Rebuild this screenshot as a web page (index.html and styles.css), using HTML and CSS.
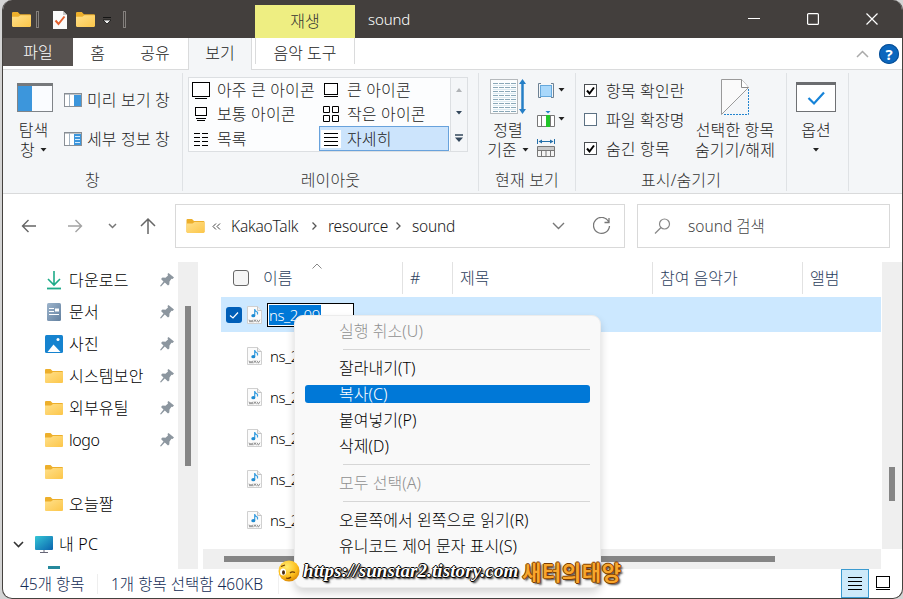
FILE: index.html
```html
<!DOCTYPE html>
<html lang="ko">
<head>
  <meta charset="UTF-8">
  <meta name="viewport" content="width=device-width, initial-scale=1">
  <title>sound</title>
  <link rel="stylesheet" href="styles.css">
</head>
<body>
  <svg class="defs" width="0" height="0">
    <defs>
      <linearGradient id="gFolder" x1="0" y1="0" x2="1" y2="1"><stop offset="0" stop-color="#ffe08a"/><stop offset="1" stop-color="#fcc64a"/></linearGradient>
      <linearGradient id="gPc" x1="0" y1="0" x2="1" y2="1"><stop offset="0" stop-color="#35c6d6"/><stop offset="1" stop-color="#0a63ae"/></linearGradient>
      <linearGradient id="gDoc" x1="0" y1="0" x2="1" y2="1"><stop offset="0" stop-color="#9db4cc"/><stop offset="1" stop-color="#62809f"/></linearGradient>
      <radialGradient id="gFace" cx=".4" cy=".3" r=".8"><stop offset="0" stop-color="#ffec70"/><stop offset=".6" stop-color="#fdbd1c"/><stop offset="1" stop-color="#d07800"/></radialGradient>
      <symbol id="folder" viewBox="0 0 18 14"><path d="M0 1Q0 0 1 0H5.500L7.500 2H17Q18 2 18 3V13H0Z" fill="#edaf2b"/><path d="M0 4.500H6L8 3H17.500Q18 3 18 3.500V13Q18 14 17 14H1Q0 14 0 13Z" fill="url(#gFolder)"/></symbol>
      <symbol id="pin" viewBox="0 0 14 14"><path d="M8.500 0L14 4.500L12.500 6L11.500 5.800L9.500 8.500L9.300 11.500L8 12.500L4.800 9.500L1 13.500L0 13L3.500 8.500L1 6L2.500 4.500L5.500 4.700L8 2.500L7.500 1Z" fill="#8c969f"/></symbol>
      <symbol id="wav" viewBox="0 0 15 18"><path d="M.5.5H10.500L14.500 4.500V17.500H.5Z" fill="#fbfbfb" stroke="#d0d0d0"/><path d="M10.500.5V4.500H14.500" fill="#eee" stroke="#c4c4c4"/><path d="M7.700 3V9.500M7.700 3.500Q8.500 5.500 10.500 6.200V8.500" fill="none" stroke="#3a9fe0" stroke-width="1.200"/><ellipse cx="6.300" cy="9.700" rx="2" ry="1.600" fill="#1e8bd2"/><path d="M2 13.700L3 16.200L4 14.200L5 16.200L6 13.700M6.700 16.200L8 13.700L9.400 16.200M10 13.700L11.400 16.200L12.900 13.700" fill="none" stroke="#888" stroke-width=".9"/></symbol>
      <symbol id="caret" viewBox="0 0 6 4"><path d="M0 0H6L3 3.500Z" fill="currentColor"/></symbol>
    </defs>
  </svg>

  <div class="window">
    <header class="titlebar">
      <div class="quick">
        <svg class="q1" width="19" height="15"><use href="#folder"/></svg>
        <i class="q-sep"></i>
        <svg class="q2" width="14" height="18" viewBox="0 0 14 18"><path d="M0 0H10L14 4V18H0Z" fill="#fafafa"/><path d="M10 0V4H14" fill="#c9c9c9"/><path d="M2.500 9.500L5.500 13L11.500 5.500" fill="none" stroke="#e3612f" stroke-width="2"/></svg>
        <svg class="q3" width="19" height="15"><use href="#folder"/></svg>
        <svg class="q4" width="8" height="7" viewBox="0 0 8 7"><path d="M0 .5H8" stroke="#151515"/><path d="M0 3H8L4 7Z" fill="#eee" stroke="#111" stroke-width=".8"/></svg>
        <i class="q-sep"></i>
      </div>
      <div class="context-tab">재생</div>
      <div class="title">sound</div>
      <div class="win-buttons">
        <svg width="12" height="12"><path d="M0 5.500H12" stroke="#fff"/></svg>
        <svg width="12" height="12"><rect x=".6" y=".6" width="10.800" height="10.800" rx="1" fill="none" stroke="#fff" stroke-width="1.200"/></svg>
        <svg width="12" height="12"><path d="M.5.5L11.500 11.500M11.500.5L.5 11.500" stroke="#fff" stroke-width="1.200"/></svg>
      </div>
    </header>

    <nav class="tabs">
      <div class="tab file">파일</div>
      <div class="tab home">홈</div>
      <div class="tab share">공유</div>
      <div class="tab view">보기</div>
      <div class="tab music">음악 도구</div>
      <div class="tab-tools">
        <svg width="14" height="8"><path d="M1 7L6.500 1.500L12 7" fill="none" stroke="#aaa" stroke-width="1.500"/></svg>
        <span class="help">?</span>
      </div>
    </nav>

    <section class="ribbon">
      <div class="group g-pane">
        <div class="group-body">
          <div class="big nav-pane">
            <svg width="36" height="29"><rect x=".5" y=".5" width="35" height="28" fill="#fafcff" stroke="#808488"/><path d="M0 1.500H36" stroke="#76797c" stroke-width="3"/><rect x="1" y="3" width="14" height="25" fill="#3c96dc"/></svg>
            <span>탐색</span>
            <span>창 <svg class="caret" width="7" height="4"><use href="#caret"/></svg></span>
          </div>
          <div class="stack">
            <div class="small"><svg width="18" height="14"><rect x=".5" y=".5" width="17" height="13" fill="#fff" stroke="#8a9097"/><path d="M0 1H18" stroke="#858b91"/><path d="M5.500 1V13" stroke="#a4b4c2"/><rect x="10" y="2" width="7" height="11" fill="#3c96dc"/></svg>미리 보기 창</div>
            <div class="small"><svg width="18" height="14"><rect x=".5" y=".5" width="17" height="13" fill="#fff" stroke="#8a9097"/><path d="M0 1H18" stroke="#858b91"/><path d="M5.500 1V13" stroke="#a4b4c2"/><rect x="10" y="2" width="7" height="11" fill="#3c96dc"/><path d="M11 4.500H16M11 7.500H16M11 10.500H16" stroke="#d5ecff"/></svg>세부 정보 창</div>
          </div>
        </div>
        <div class="group-label">창</div>
      </div>

      <div class="group g-layout">
        <div class="group-body">
          <div class="gallery">
            <div class="item"><svg width="20" height="18"><rect x="1.500" y="1.500" width="17" height="14" fill="#fff" stroke="#000"/><path d="M4 17.500H16" stroke="#000"/></svg>아주 큰 아이콘</div>
            <div class="item"><svg width="20" height="18"><rect x="3.500" y="2.500" width="13" height="11" fill="#fff" stroke="#000"/><path d="M3 15.500H17" stroke="#000"/></svg>큰 아이콘</div>
            <div class="item"><svg width="20" height="18"><rect x="4.500" y="2.500" width="11" height="8" fill="#fff" stroke="#000"/><path d="M5 13.500H15M6 15.500H14" stroke="#000"/></svg>보통 아이콘</div>
            <div class="item"><svg width="20" height="18"><path d="M2.500 1.500H8.500V7.500H2.500ZM11.500 1.500H17.500V7.500H11.500ZM2.500 10.500H8.500V16.500H2.500ZM11.500 10.500H17.500V16.500H11.500Z" fill="#fff" stroke="#000"/></svg>작은 아이콘</div>
            <div class="item"><svg width="20" height="18"><path d="M3 3.500H17M3 7.500H17M3 11.500H17M3 15.500H17" stroke="#000" stroke-dasharray="6 2"/></svg>목록</div>
            <div class="item selected"><svg width="20" height="18"><path d="M3 3.500H17M3 7.500H17M3 11.500H17M3 15.500H17" stroke="#000"/></svg>자세히</div>
          </div>
          <div class="gallery-scroll">
            <svg width="6" height="4"><path d="M0 4H6L3 0Z" fill="#b0b3b6"/></svg>
            <svg class="slate" width="6" height="4"><use href="#caret"/></svg>
            <svg width="8" height="8"><path d="M0 1H8" stroke="#33475b" stroke-width="1.500"/><path d="M0 3.500H8L4 8Z" fill="#33475b"/></svg>
          </div>
        </div>
        <div class="group-label">레이아웃</div>
      </div>

      <div class="group g-current">
        <div class="group-body">
          <div class="big sort">
            <svg width="36" height="36"><rect x=".5" y=".5" width="27" height="34" fill="#fbfdfe" stroke="#b5b9bc"/><path d="M3 4.500H26M3 8.500H26M3 12.500H26M3 16.500H26M3 20.500H26M3 24.500H26M3 28.500H26M3 32.500H26" stroke="#8aa8b8" stroke-dasharray="5 1"/><path d="M3 6.500H26M3 10.500H26M3 14.500H26M3 18.500H26M3 22.500H26M3 26.500H26M3 30.500H26" stroke="#dbeaf1"/><path d="M32.500 2V33" stroke="#267fc6" stroke-width="2.500"/><path d="M29 5L32.500 0L36 5ZM29 30L32.500 35L36 30Z" fill="#267fc6"/></svg>
            <span>정렬</span>
            <span>기준 <svg class="caret" width="7" height="4"><use href="#caret"/></svg></span>
          </div>
          <div class="stack">
            <div class="tool"><svg width="18" height="18"><path d="M4 2.500H1.500V16.500H4M14 2.500H16.500V16.500H14" fill="none" stroke="#6d8193"/><rect x="3.500" y="4.500" width="11" height="11" fill="#a9d8fb" stroke="#65a8dc"/></svg><svg width="7" height="4"><use href="#caret"/></svg></div>
            <div class="tool"><svg width="18" height="18"><path d="M.5 5.500H17.500V16.500H.5ZM4.500 5.500V16.500M13.500 5.500V16.500" fill="#fff" stroke="#777"/><rect x="9" y="5" width="4" height="12" fill="#22c52a"/><path d="M8.500 1H13.500L11 3.500Z" fill="#2781c5"/></svg><svg width="7" height="4"><use href="#caret"/></svg></div>
            <div class="tool"><svg width="18" height="20"><path d="M.5 1V6M17.500 1V6" stroke="#246fa9"/><path d="M2 3.500H16" stroke="#246fa9"/><path d="M1.500 3.500L5 1.500V5.500ZM16.500 3.500L13 1.500V5.500Z" fill="#246fa9"/><path d="M.5 8.500H17.500V18.500H.5ZM.5 12.500H17.500M4.500 12.500V18.500M9 12.500V18.500M13.500 12.500V18.500" fill="#f4f4f4" stroke="#777"/><path d="M1 10.500H17" stroke="#c9c9c9" stroke-width="3"/></svg></div>
          </div>
        </div>
        <div class="group-label">현재 보기</div>
      </div>

      <div class="group g-show">
        <div class="group-body">
          <div class="stack">
            <div class="check"><svg width="13" height="13"><rect x=".5" y=".5" width="12" height="12" fill="#fff" stroke="#4b4f53"/><path d="M3 6.500L5.500 9.500L10 3.500" fill="none" stroke="#000" stroke-width="2"/></svg>항목 확인란</div>
            <div class="check"><svg width="13" height="13"><rect x=".5" y=".5" width="12" height="12" fill="#fff" stroke="#5c7183"/></svg>파일 확장명</div>
            <div class="check"><svg width="13" height="13"><rect x=".5" y=".5" width="12" height="12" fill="#fff" stroke="#4b4f53"/><path d="M3 6.500L5.500 9.500L10 3.500" fill="none" stroke="#000" stroke-width="2"/></svg>숨긴 항목</div>
          </div>
          <div class="big hide">
            <svg width="28" height="37"><path d="M.5 35.500V.5H20.500L27.500 8.500Z" fill="#fafafa" stroke="#9a9a9a"/><path d="M20.500.5V8.500H27.500" fill="#fff" stroke="#8b8b8b"/><path d="M27.500 10V35.500H2" fill="none" stroke="#2284cf" stroke-dasharray="2 1"/></svg>
            <span>선택한 항목</span>
            <span>숨기기/해제</span>
          </div>
        </div>
        <div class="group-label">표시/숨기기</div>
      </div>

      <div class="group g-option">
        <div class="group-body">
          <div class="big option">
            <svg width="40" height="31"><rect x=".5" y=".5" width="39" height="29" fill="#fff" stroke="#6f7174"/><path d="M0 1.500H40" stroke="#6b6d70" stroke-width="3"/><path d="M12.500 16L18 21.500L28 10.500" fill="none" stroke="#1683d8" stroke-width="2.200"/></svg>
            <span>옵션</span>
            <span><svg class="caret" width="6" height="4"><use href="#caret"/></svg></span>
          </div>
        </div>
      </div>
    </section>

    <section class="navbar">
      <svg class="back" width="16" height="16"><path d="M15 8H1.500M7.500 2L1.500 8L7.500 14" fill="none" stroke="#666" stroke-width="1.400"/></svg>
      <svg class="forward" width="16" height="16"><path d="M1 8H14.500M8.500 2L14.500 8L8.500 14" fill="none" stroke="#a3a3a3" stroke-width="1.400"/></svg>
      <svg class="recent" width="9" height="6"><path d="M1 1L4.500 4.500L8 1" fill="none" stroke="#777" stroke-width="1.500"/></svg>
      <svg class="up" width="16" height="18"><path d="M8 17V2M1 9L8 2L15 9" fill="none" stroke="#666" stroke-width="1.500"/></svg>
      <div class="address">
        <svg width="19" height="14"><use href="#folder"/></svg>
        <svg class="laquo" width="9" height="7"><path d="M4 .5L1 3.500L4 6.500M8 .5L5 3.500L8 6.500" fill="none" stroke="#444"/></svg>
        <span class="crumb c1">KakaoTalk</span>
        <svg width="5" height="8"><path d="M.5.5L4 4L.5 7.500" fill="none" stroke="#555" stroke-width="1.300"/></svg>
        <span class="crumb c2">resource</span>
        <svg width="5" height="8"><path d="M.5.5L4 4L.5 7.500" fill="none" stroke="#555" stroke-width="1.300"/></svg>
        <span class="crumb c3">sound</span>
        <svg class="drop" width="13" height="8"><path d="M1 1L6.500 6.500L12 1" fill="none" stroke="#777" stroke-width="1.400"/></svg>
        <svg class="refresh" width="18" height="18"><path d="M15.500 4.500A8 8 0 1 0 16.500 9M16 1V5.500H11.500" fill="none" stroke="#777" stroke-width="1.300"/></svg>
      </div>
      <div class="search">
        <svg width="17" height="16"><circle cx="10.500" cy="6" r="5" fill="none" stroke="#888" stroke-width="1.200"/><path d="M7 9.500L1 15.500" stroke="#888" stroke-width="1.200"/></svg>
        <span>sound 검색</span>
      </div>
    </section>

    <main class="content">
      <aside class="tree">
        <div class="node"><svg class="ico" width="18" height="20"><path d="M9 1V14M3 9L9 15L15 9" fill="none" stroke="#1eab89" stroke-width="1.600"/><path d="M2 18.500H16" stroke="#1eab89" stroke-width="1.800"/></svg><span>다운로드</span><svg class="pin" width="14" height="14"><use href="#pin"/></svg></div>
        <div class="node"><svg class="ico" width="18" height="20"><rect x="2" y="1" width="14" height="18" rx="1.500" fill="url(#gDoc)"/><path d="M4 6.500H9M4 9.500H9M4 12.500H14" stroke="#fff"/><path d="M10 6.500H14V9.500H10Z" fill="#fff"/></svg><span>문서</span><svg class="pin" width="14" height="14"><use href="#pin"/></svg></div>
        <div class="node"><svg class="ico" width="18" height="18"><rect width="18" height="18" rx="1.500" fill="#1683cf"/><path d="M2.500 17L8.500 9.500L15.500 17Z" fill="#fff"/><circle cx="13" cy="4.500" r="1.500" fill="#fff"/></svg><span>사진</span><svg class="pin" width="14" height="14"><use href="#pin"/></svg></div>
        <div class="node"><svg class="ico" width="18" height="14"><use href="#folder"/></svg><span>시스템보안</span><svg class="pin" width="14" height="14"><use href="#pin"/></svg></div>
        <div class="node"><svg class="ico" width="18" height="14"><use href="#folder"/></svg><span>외부유틸</span><svg class="pin" width="14" height="14"><use href="#pin"/></svg></div>
        <div class="node"><svg class="ico" width="18" height="14"><use href="#folder"/></svg><span class="latin">logo</span><svg class="pin" width="14" height="14"><use href="#pin"/></svg></div>
        <div class="node"><svg class="ico" width="18" height="14"><use href="#folder"/></svg></div>
        <div class="node"><svg class="ico" width="18" height="14"><use href="#folder"/></svg><span>오늘짤</span></div>
        <div class="node pc"><svg class="chev" width="11" height="7"><path d="M1 1L5.500 5.500L10 1" fill="none" stroke="#333" stroke-width="1.600"/></svg><svg class="ico" width="18" height="17"><rect y="0" width="18" height="14" rx="1" fill="url(#gPc)"/><path d="M9 14V16M5 16.500H13" stroke="#667"/></svg><span>내 PC</span></div>
        <div class="node cut"><svg width="12" height="10"><rect width="12" height="10" fill="#26899c"/></svg></div>
      </aside>
      <div class="vscroll tree-scroll"><i></i></div>

      <section class="files">
        <div class="file-main">
          <div class="file-area">
            <div class="thead">
              <div class="th name"><i class="box"></i>이름<svg class="sort-mark" width="10" height="6"><path d="M.5 5.500L5 1L9.500 5.500" fill="none" stroke="#888"/></svg></div>
              <div class="th num">#</div>
              <div class="th subject">제목</div>
              <div class="th artist">참여 음악가</div>
              <div class="th">앨범</div>
            </div>
            <div class="row active">
              <svg class="ticked" width="16" height="16"><rect width="16" height="16" rx="3" fill="#005fb8"/><path d="M4 8.500L7 11L12 5.500" fill="none" stroke="#fff" stroke-width="1.200"/></svg>
              <svg width="15" height="18"><use href="#wav"/></svg>
              <div class="rename"><span>ns_2_09</span></div>
            </div>
            <div class="row"><svg width="15" height="18"><use href="#wav"/></svg><span>ns_2</span></div>
            <div class="row"><svg width="15" height="18"><use href="#wav"/></svg><span>ns_2</span></div>
            <div class="row"><svg width="15" height="18"><use href="#wav"/></svg><span>ns_2</span></div>
            <div class="row"><svg width="15" height="18"><use href="#wav"/></svg><span>ns_2</span></div>
            <div class="row"><svg width="15" height="18"><use href="#wav"/></svg><span>ns_2</span></div>
          </div>
          <div class="vscroll file-scroll"><i></i></div>
        </div>
        <div class="hscroll"><i></i></div>
      </section>
    </main>

    <footer class="status">
      <span class="count">45개 항목</span>
      <span class="picked">1개 항목 선택함 460KB</span>
      <div class="modes">
        <div class="mode on"><svg width="14" height="14"><path d="M0 .5H14M0 4.500H14M0 8.500H14M0 12.500H14" stroke="#000"/></svg></div>
        <div class="mode"><svg width="14" height="15"><rect x=".5" y=".5" width="13" height="11" fill="#fff" stroke="#000"/><path d="M0 13.500H14" stroke="#000"/></svg></div>
      </div>
    </footer>
  </div>

  <div class="menu">
    <div class="entry off">실행 취소(U)</div>
    <hr>
    <div class="entry">잘라내기(T)</div>
    <div class="entry hot"><span>복사(C)</span></div>
    <div class="entry">붙여넣기(P)</div>
    <div class="entry">삭제(D)</div>
    <hr>
    <div class="entry off">모두 선택(A)</div>
    <hr>
    <div class="entry">오른쪽에서 왼쪽으로 읽기(R)</div>
    <div class="entry">유니코드 제어 문자 표시(S)</div>
  </div>

  <div class="watermark">
    <svg width="22" height="22"><circle cx="11" cy="11" r="10.500" fill="url(#gFace)"/><ellipse cx="5" cy="12" rx="3" ry="3.500" fill="#fff"/><ellipse cx="5.500" cy="12.500" rx="1.500" ry="2.200" fill="#4a2b10"/><path d="M12 13Q14 11 17 12.500M3 6.500L7 5M8 18Q11 19 13 17" fill="none" stroke="#6e3c05" stroke-width="1.200"/></svg>
    <span class="url">https://sunstar2.tistory.com</span>
    <span class="who">새터의태양</span>
  </div>
</body>
</html>
```

FILE: styles.css
```css
* { box-sizing: border-box; }

body {
  margin: 0;
  width: 903px;
  height: 599px;
  overflow: hidden;
  background: #d4d4d4;
  color: #1a1a1a;
  font-family: 'Noto Sans', 'Noto Sans CJK KR', sans-serif;
  font-size: 16px;
  font-weight: 300;
  line-height: 20px;
  white-space: nowrap;
}

svg { display: block; flex: none; }
.defs { position: absolute; }

.window {
  display: flex;
  flex-direction: column;
  width: 901px;
  height: 599px;
  margin-left: 2px;
  border: 1px solid #45423f;
  border-top: none;
  border-radius: 10px;
  background: #fff;
  overflow: hidden;
}

/* title bar */
.titlebar {
  display: flex;
  height: 38px;
  flex: none;
  background: #433f3d;
  color: #fff;
}
.quick {
  display: flex;
  align-items: center;
  width: 252px;
  padding-left: 9px;
}
.q-sep { width: 3px; height: 17px; border: 1px solid #84807d; }
.q1 { margin-right: 5px; }
.q2 { margin: 2px 9px 0 14px; }
.q3 { margin-right: 8px; }
.q4 { margin: 3px 12px 0 0; }
.context-tab {
  width: 100px;
  margin-top: 5px;
  padding-top: 6px;
  background: #eeee82;
  color: #333;
  text-align: center;
}
.title { padding: 9px 0 0 13px; font-size: 15px; letter-spacing: -0.1px; }
.win-buttons {
  display: flex;
  gap: 47px;
  margin-left: auto;
  padding: 13px 24px 0 0;
}

/* tabs */
.tabs {
  display: flex;
  height: 32px;
  flex: none;
  border-bottom: 1px solid #dadbdc;
  color: #222;
}
.tab { height: 32px; padding-top: 5px; text-align: center; }
.tab.file { width: 70px; height: 28px; padding-top: 4px; background: #575250; color: #fff; }
.tab.home { width: 49px; }
.tab.share { width: 66px; }
.tab.view { width: 64px; background: #f4f6f8; border: solid #dadbdc; border-width: 0 1px; }
.tab.music { width: 100px; margin-left: 3px; border: solid #dadbdc; border-width: 0 1px; height: 26px; }
.tab-tools { display: flex; align-items: center; gap: 9px; margin-left: auto; padding-right: 3px; }
.help {
  width: 20px;
  height: 20px;
  border-radius: 50%;
  background: #0b66bd;
  box-shadow: inset 0 0 0 1px #0a4f95;
  color: #fff;
  font-weight: bold;
  font-size: 15px;
  text-align: center;
}

/* ribbon */
.ribbon {
  display: flex;
  height: 124px;
  flex: none;
  padding: 3px 0 2px;
  background: #f4f6f8;
  border-bottom: 1px solid #d9dadb;
  color: #222;
  letter-spacing: 0.15px;
}
.group { display: flex; flex-direction: column; border-right: 1px solid #dfe2e5; }
.g-pane { width: 180px; }
.g-layout { width: 296px; }
.g-current { width: 97px; }
.g-show { width: 211px; }
.g-option { width: 62px; }
.group-body { display: flex; height: 97px; }
.group-label { text-align: center; line-height: 20px; color: #333; }
.big { display: flex; flex-direction: column; align-items: center; }
.big > svg { margin-bottom: auto; }
.big span { display: flex; align-items: center; justify-content: center; height: 20px; }
.big .caret { margin: 0 0 0 5px; color: #222; }
.stack { display: flex; flex-direction: column; }
.small { display: flex; align-items: center; height: 39px; gap: 5px; }

.nav-pane { width: 61px; padding: 10px 0 10px; }
.nav-pane > svg { margin-left: 3px; }
.g-pane .stack { padding-top: 7px; }

.g-layout .group-body { padding: 4px 0 0 5px; }
.gallery {
  display: grid;
  grid-template-columns: 130px 130px;
  grid-template-rows: 24px 24px 25px;
  width: 263px;
  height: 75px;
  border: 1px solid #dcdfe2;
  background: #fcfdfe;
}
.gallery .item { display: flex; align-items: center; padding-left: 2px; gap: 6px; }
.gallery .selected { background: #cce4fc; border: 1px solid #68a2dc; }
.gallery .selected svg { margin-left: -1px; background: #fff; }
.gallery-scroll {
  display: flex;
  flex-direction: column;
  align-items: center;
  justify-content: space-around;
  width: 17px;
  height: 75px;
  border: 1px solid #dcdfe2;
  border-left: none;
}
.slate { color: #33475b; }

.sort { width: 58px; padding: 6px 0 10px; }
.g-current .stack { padding-top: 2px; }
.tool { display: flex; align-items: center; gap: 3px; height: 29px; }

.g-show .stack { padding: 3px 0 0 8px; width: 118px; }
.check { display: flex; align-items: center; gap: 9px; height: 29px; }
.hide { width: 82px; padding: 6px 0 10px; }
.option { width: 58px; padding: 9px 0 10px; }
.option .caret { margin: 0; }

/* address bar */
.navbar { display: flex; align-items: center; height: 68px; flex: none; padding-bottom: 4px; }
.back { margin-left: 18px; }
.forward { margin-left: 30px; }
.recent { margin-left: 25px; }
.up { margin-left: 23px; }
.address, .search { display: flex; align-items: center; height: 44px; border: 1px solid #d9d9d9; }
.address { width: 450px; margin-left: 19px; padding-left: 10px; font-size: 15.5px; }
.laquo { margin: 0 10px 0 7px; }
.crumb { letter-spacing: -0.2px; }
.c1 { width: 81px; }
.c2 { width: 60px; margin: 0 8px 0 11px; }
.c3 { margin-left: 11px; }
.drop { margin-left: auto; }
.refresh { margin: 0 13px 0 28px; }
.search { width: 253px; margin-left: 12px; padding-left: 16px; gap: 17px; color: #444; font-size: 15.5px; }

/* navigation tree */
.content { display: flex; height: 307px; flex: none; }
.tree { width: 175px; padding-top: 2px; overflow: hidden; }
.node { display: flex; align-items: center; height: 32px; padding-left: 42px; color: #000; letter-spacing: 0.2px; }
.node .ico { margin-right: 6px; }
.node .pin { margin: 0 4px 0 auto; }
.node .latin { letter-spacing: -0.4px; }
.node.pc { margin-top: 8px; padding-left: 10px; }
.node.pc .ico { margin: 0 6px 0 11px; }
.node.cut { height: 10px; margin-top: 6px; padding-left: 45px; }
.vscroll { width: 20px; flex: none; background: #efefef; }
.vscroll i { display: block; width: 6px; margin-left: 7px; background: #858585; }
.tree-scroll { padding-top: 44px; }
.tree-scroll i { height: 160px; }

/* file list */
.files { display: flex; flex-direction: column; flex: 1; margin-left: 5px; }
.file-main { display: flex; height: 287px; }
.file-area { width: 679px; padding-left: 18px; overflow: hidden; }
.thead { display: flex; height: 35px; color: #2c3e5c; }
.th { height: 32px; padding: 6px 0 0 7px; border-right: 1px solid #e2e2e2; }
.th:last-child { border: none; }
.th.name { display: flex; width: 182px; padding-left: 12px; }
.box { width: 16px; height: 16px; margin: 2px 14px 0 0; border: 1px solid #666; border-radius: 3px; background: #f5f5f5; }
.sort-mark { margin: -5px 0 0 20px; }
.th.num { width: 50px; }
.th.subject { width: 200px; }
.th.artist { width: 150px; }
.row {
  display: flex;
  align-items: center;
  width: 660px;
  height: 35px;
  margin-bottom: 6px;
  padding-left: 26px;
  gap: 8px;
  font-size: 15px;
  letter-spacing: -0.5px;
}
.row span { color: #000; }
.row.active { padding-left: 5px; gap: 5px; background: #cce8ff; }
.rename {
  width: 87px;
  height: 24px;
  border: 1px solid #000;
  background: #fff;
  padding: 1px;
}
.row .rename span { display: block; width: 52px; height: 20px; background: #0078d7; color: #fff; }
.file-scroll { padding-top: 205px; }
.file-scroll i { height: 34px; }
.hscroll { width: 678px; height: 20px; padding: 7px 0 0 21px; background: #efefef; }
.hscroll i { display: block; width: 551px; height: 6px; background: #858585; }

/* status bar */
.status { display: flex; align-items: center; height: 29px; flex: none; padding-left: 17px; color: #122b54; font-size: 15.5px; }
.count { width: 78px; border-right: 1px solid #eee; }
.picked { width: 181px; padding-left: 13px; border-right: 1px solid #f0f0f0; }
.modes { display: flex; margin-left: auto; padding-right: 5px; }
.mode { display: flex; align-items: center; justify-content: center; width: 28px; height: 29px; }
.mode.on { background: #cdeafa; border: 1px solid #3c9bd0; }

/* edit menu over the list */
.menu {
  position: absolute;
  left: 294px;
  top: 315px;
  width: 307px;
  height: 273px;
  padding: 2px 10px 0;
  border: 1px solid #ececec;
  border-radius: 9px;
  background: #f9f9f9;
  box-shadow: 0 5px 9px rgba(0, 0, 0, 0.16);
  color: #000;
}
.entry { display: flex; align-items: center; height: 26px; padding-left: 34px; letter-spacing: 0.05px; }
.entry.off { color: #909090; }
.entry.hot { padding: 0; }
.hot span { width: 285px; height: 18px; line-height: 18px; padding-left: 34px; border-radius: 3px; background: #0078d7; color: #fff; }
.menu hr { height: 1px; margin: 5px 0 5px 38px; border: none; background: #d6d6d6; }

/* blog signature */
.watermark { position: absolute; left: 278px; top: 559px; display: flex; align-items: center; height: 24px; }
.url {
  width: 219px;
  margin-left: 3px;
  font: italic bold 19px/24px 'Liberation Serif', serif;
  letter-spacing: 0.1px;
  color: #fff;
  text-shadow: 1px 0 #000, -1px 0 #000, 0 1px #000, 0 -1px #000, 1px 1px 2px #000, 2px 2px 2px #333;
}
.who {
  font: bold 21px/24px 'Noto Sans CJK KR', sans-serif;
  letter-spacing: 0.6px;
  color: #f8a62c;
  text-shadow: 1px 0 #7c3c00, -1px 0 #7c3c00, 0 1px #7c3c00, 0 -1px #7c3c00, 2px 2px 2px #444;
}
```
